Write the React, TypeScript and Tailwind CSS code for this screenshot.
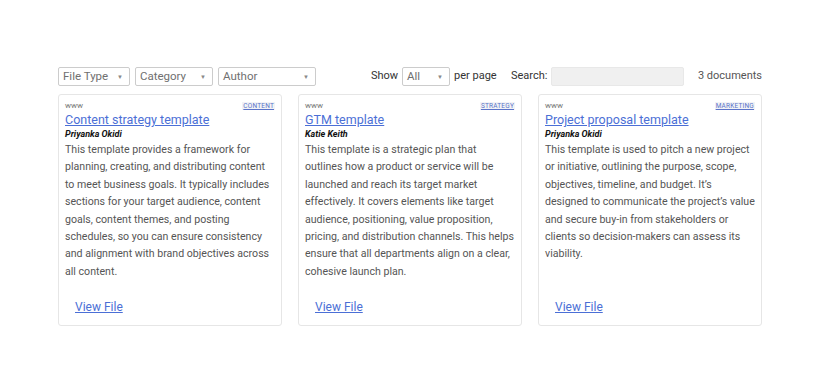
import React from "react";

const cards = [
  {
    tag: "CONTENT",
    title: "Content strategy template",
    author: "Priyanka Okidi",
    desc: "This template provides a framework for planning, creating, and distributing content to meet business goals. It typically includes sections for your target audience, content goals, content themes, and posting schedules, so you can ensure consistency and alignment with brand objectives across all content.",
  },
  {
    tag: "STRATEGY",
    title: "GTM template",
    author: "Katie Keith",
    desc: "This template is a strategic plan that outlines how a product or service will be launched and reach its target market effectively. It covers elements like target audience, positioning, value proposition, pricing, and distribution channels. This helps ensure that all departments align on a clear, cohesive launch plan.",
  },
  {
    tag: "MARKETING",
    title: "Project proposal template",
    author: "Priyanka Okidi",
    desc: "This template is used to pitch a new project or initiative, outlining the purpose, scope, objectives, timeline, and budget. It’s designed to communicate the project’s value and secure buy-in from stakeholders or clients so decision-makers can assess its viability.",
  },
];

function Select({ label, w }: { label: string; w: string }) {
  return (
    <div
      className={`${w} h-[19px] border border-[#cccccc] rounded-[2px] bg-white flex items-center justify-between pl-[4px] pr-[6px] text-[11.5px] text-[#707070] whitespace-nowrap`}
    >
      <span>{label}</span>
      <span className="text-[6px] text-[#888888]">▼</span>
    </div>
  );
}

export default function App() {
  return (
    <div
      className="w-[820px] h-[379px] bg-white"
      style={{ fontFamily: "Roboto, 'Liberation Sans', sans-serif" }}
    >
      <div className="w-[704px] mx-auto pt-[67px]">
        <div className="flex items-center h-[19px] whitespace-nowrap">
          <div className="flex gap-[5px]">
            <Select label="File Type" w="w-[72px]" />
            <Select label="Category" w="w-[78px]" />
            <Select label="Author" w="w-[98px]" />
          </div>
          <div className="flex items-center ml-[55px] text-[11px] text-[#333333]">
            <span className="w-[26px]">Show</span>
            <div className="ml-[5px]">
              <Select label="All" w="w-[48px]" />
            </div>
            <span className="ml-[4px] w-[42px]">per page</span>
            <span className="ml-[15px] w-[36px]">Search:</span>
            <div className="ml-[4px] w-[133px] h-[19px] bg-[#f0f0f0] border border-[#e8e8e8] rounded-[2px]" />
          </div>
          <span className="ml-auto text-[11px] text-[#555555]">3 documents</span>
        </div>
        <div className="grid grid-cols-3 gap-[16px] mt-[8px]">
          {cards.map((c) => (
            <div
              key={c.title}
              className="h-[232px] border border-[#e6e6e6] rounded-[3px] px-[6px] pt-[6px] flex flex-col"
            >
              <div className="flex items-center justify-between h-[10px]">
                <span className="text-[8px] text-[#777777] leading-none">www</span>
                <span className="text-[6.5px] leading-none text-[#5b73c9] underline bg-[#f2f3f6] px-[1px] py-[1px] tracking-[0.2px]">
                  {c.tag}
                </span>
              </div>
              <a className="mt-[1px] text-[12.5px] leading-[16px] text-[#4b6fd6] underline">
                {c.title}
              </a>
              <div className="text-[9px] leading-[12px] font-bold italic text-[#111111]">
                {c.author}
              </div>
              <p className="mt-[1px] text-[10.6px] leading-[17.4px] text-[#555555]">{c.desc}</p>
              <div className="mt-auto mb-[7px] pl-[10px]">
                <a className="text-[12px] text-[#4b6fd6] underline">View File</a>
              </div>
            </div>
          ))}
        </div>
      </div>
    </div>
  );
}
